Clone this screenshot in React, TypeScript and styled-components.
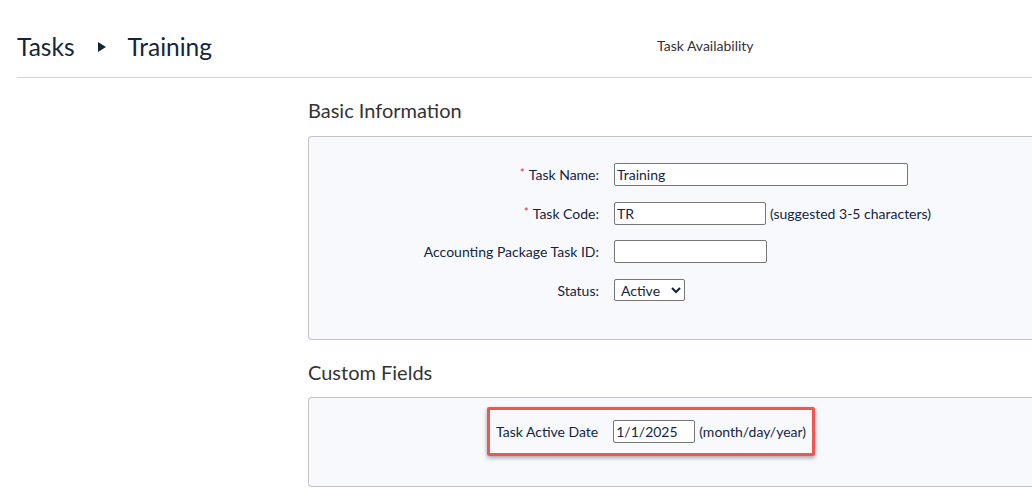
import React from 'react';
import styled, { createGlobalStyle } from 'styled-components';

const GlobalStyle = createGlobalStyle`
  html, body {
    margin: 0;
    padding: 0;
    background: #ffffff;
    overflow: hidden;
  }
  body {
    font-family: Lato, "Open Sans", Arial, sans-serif;
  }
`;

const Page = styled.div`
  width: 1032px;
  height: 503px;
  overflow: hidden;
`;

const Header = styled.header`
  display: flex;
  align-items: center;
  box-sizing: border-box;
  height: 78px;
  padding-top: 16px;
  margin-left: 17px;
  border-bottom: 1px solid #c9d4df;
`;

const Breadcrumb = styled.h1`
  display: flex;
  align-items: center;
  margin: 0;
  font-size: 24.5px;
  font-weight: 400;
  color: #14253d;
  width: 640px;
`;

const Arrow = styled.span`
  display: inline-block;
  width: 0;
  height: 0;
  margin: 0 22px 0 23px;
  border-top: 5px solid transparent;
  border-bottom: 5px solid transparent;
  border-left: 8px solid #14253d;
`;

const Tab = styled.div`
  margin-top: -2px;
  font-size: 14px;
  color: #2f3338;
`;

const Body = styled.div`
  display: grid;
  grid-template-columns: 308px 1fr;
`;

const Main = styled.main`
  display: flex;
  flex-direction: column;
`;

const SectionTitle = styled.h2<{ $top: number; $bottom: number }>`
  margin: ${p => p.$top}px 0 ${p => p.$bottom}px;
  font-size: 20px;
  font-weight: 400;
  color: #333333;
  line-height: 24px;
`;

const Panel = styled.section<{ $top: number; $bottom: number }>`
  background: #f8f9fd;
  border: 1px solid #c4c4c4;
  border-right: none;
  border-radius: 4px 0 0 4px;
  padding: ${p => p.$top}px 0 ${p => p.$bottom}px;
  width: 740px;
`;

const FormGrid = styled.div`
  display: grid;
  grid-template-columns: 290px auto;
  grid-auto-rows: 23px;
  column-gap: 15px;
  row-gap: 15.5px;
  align-items: center;
  justify-content: start;
`;

const Label = styled.label`
  justify-self: end;
  font-size: 14px;
  color: #14253d;
  white-space: nowrap;
`;

const Req = styled.span`
  color: #e0262c;
  font-size: 11px;
  margin-right: 4px;
  position: relative;
  top: -3px;
`;

const Field = styled.div`
  display: flex;
  align-items: center;
  gap: 4px;
  font-size: 14px;
  color: #14253d;
`;

const TextInput = styled.input<{ $w: number }>`
  box-sizing: border-box;
  width: ${p => p.$w}px;
  height: 23px;
  padding: 2px 2px;
  border: 1px solid #767676;
  border-radius: 2px;
  background: #ffffff;
  font-family: Lato, Arial, sans-serif;
  font-size: 14px;
  color: #14253d;
  outline: none;
`;

const Select = styled.select`
  box-sizing: border-box;
  width: 71px;
  height: 22px;
  border: 1px solid #767676;
  border-radius: 2px;
  background: #ffffff;
  font-family: Lato, Arial, sans-serif;
  font-size: 14px;
  color: #14253d;
  padding: 0 2px;
`;

const CustomRow = styled.div`
  display: flex;
  justify-content: start;
  margin-left: 178px;
`;

const Highlight = styled.div`
  display: flex;
  align-items: center;
  gap: 15px;
  padding: 10px 6px 10px 6px;
  border: 3px solid #f0564f;
  border-radius: 2px;
  box-shadow: 0 2px 4px rgba(0, 0, 0, 0.35);
`;

export default function App() {
  return (
    <Page>
      <GlobalStyle />
      <Header>
        <Breadcrumb>
          Tasks
          <Arrow />
          Training
        </Breadcrumb>
        <Tab>Task Availability</Tab>
      </Header>
      <Body>
        <div />
        <Main>
          <SectionTitle $top={20} $bottom={14}>Basic Information</SectionTitle>
          <Panel $top={26} $bottom={37}>
            <FormGrid>
              <Label><Req>*</Req>Task Name:</Label>
              <Field><TextInput $w={294} defaultValue="Training" /></Field>
              <Label><Req>*</Req>Task Code:</Label>
              <Field>
                <TextInput $w={152} defaultValue="TR" />
                (suggested 3-5 characters)
              </Field>
              <Label>Accounting Package Task ID:</Label>
              <Field><TextInput $w={153} defaultValue="" /></Field>
              <Label>Status:</Label>
              <Field>
                <Select defaultValue="Active">
                  <option>Active</option>
                  <option>Inactive</option>
                </Select>
              </Field>
            </FormGrid>
          </Panel>
          <SectionTitle $top={20} $bottom={13}>Custom Fields</SectionTitle>
          <Panel $top={9} $bottom={30}>
            <CustomRow>
              <Highlight>
                <Label>Task Active Date</Label>
                <Field>
                  <TextInput $w={82} defaultValue="1/1/2025" />
                  (month/day/year)
                </Field>
              </Highlight>
            </CustomRow>
          </Panel>
        </Main>
      </Body>
    </Page>
  );
}
